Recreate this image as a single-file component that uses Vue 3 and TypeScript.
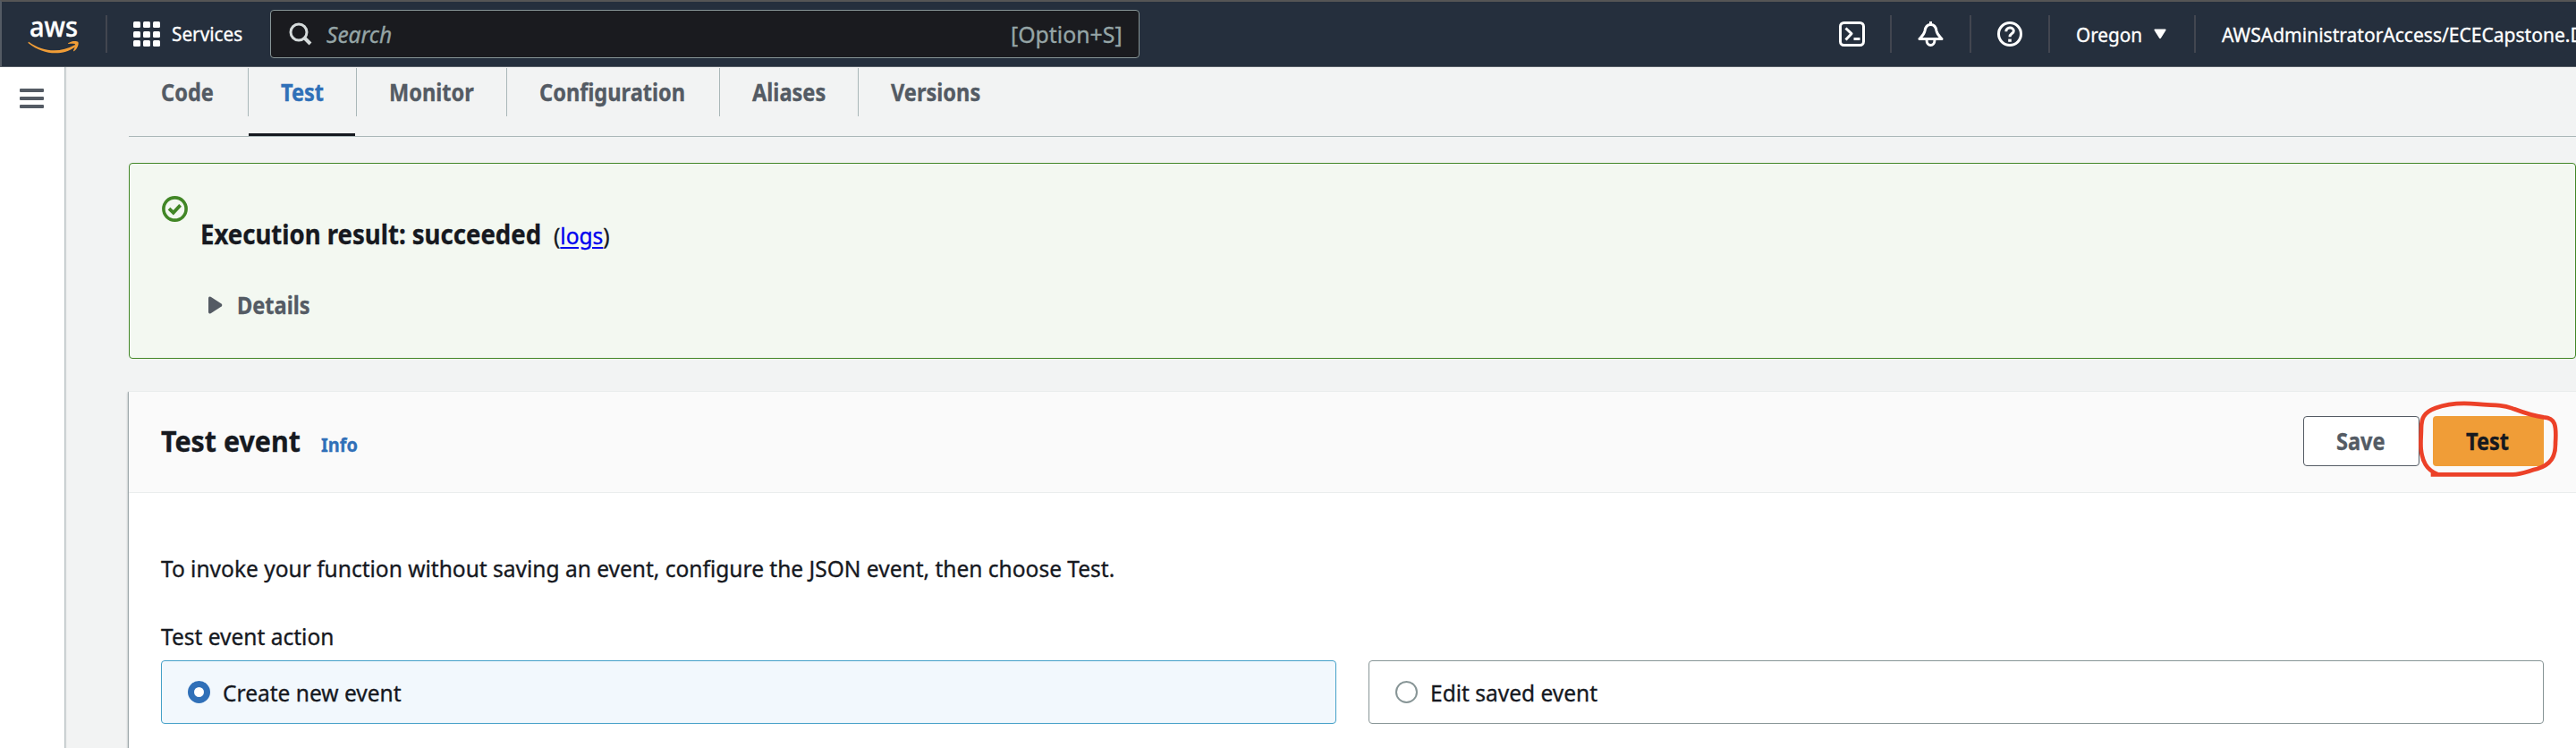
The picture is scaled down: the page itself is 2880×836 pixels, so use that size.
<script setup lang="ts">
import { ref } from 'vue'

const tabs: string[] = ['Code', 'Test', 'Monitor', 'Configuration', 'Aliases', 'Versions']
const activeTab = ref('Test')
const actions: string[] = ['Create new event', 'Edit saved event']
const selectedAction = ref('Create new event')
const cells = [0, 1, 2, 3, 4, 5, 6, 7, 8]
</script>

<template>
  <div class="console">
    <header class="topbar">
      <div class="logo">
        <svg width="60" height="48" viewBox="0 0 60 48">
          <text x="3" y="27" textLength="54" lengthAdjust="spacingAndGlyphs" class="logo-text">aws</text>
          <path d="M2.5 33 C18 44.5 38 45 53 36.5 C54.6 35.8 55.5 37.3 54.2 38.4 C39 49 18 47 2 34.4 C1 33.4 1.7 32.4 2.5 33Z" class="smile" />
          <path d="M46.5 34 C50 31.6 55.5 31.4 57.3 32.8 C58.6 35 56.6 40.6 53 43 C52.2 43.5 51.8 43 52.2 42.2 C53.4 39.6 54.6 36.4 54 35.4 C53 34.4 49.6 34.8 47 35 C46 35 45.8 34.5 46.5 34Z" class="smile" />
        </svg>
      </div>
      <button class="services">
        <span class="waffle"><i v-for="c in cells" :key="c"></i></span>
        <span class="t services-label">Services</span>
      </button>
      <div class="search">
        <svg class="search-icon" width="26" height="26" viewBox="0 0 26 26">
          <circle cx="11" cy="11" r="9" fill="none" stroke="#d5dbdb" stroke-width="3" />
          <path d="M17.5 17.5 L24 24" stroke="#d5dbdb" stroke-width="4" />
        </svg>
        <span class="t placeholder">Search</span>
        <span class="shortcut"><span class="t">[Option+S]</span></span>
      </div>
      <nav class="tools">
        <div class="tool icon">
          <svg width="29" height="28" viewBox="0 0 29 28" fill="none" stroke="#fff" stroke-width="3">
            <rect x="1.5" y="1.5" width="26" height="25" rx="4" />
            <path d="M7.5 7.5 L14 13.7 L7.5 20.5" stroke-linejoin="round" />
            <path d="M16.5 19.5 H23.5" />
          </svg>
        </div>
        <div class="tool icon">
          <svg width="29" height="28" viewBox="0 0 29 28" fill="none" stroke="#fff" stroke-width="3" stroke-linejoin="round">
            <path d="M14.5 0 V3.5" />
            <path d="M14.5 3.5 C9.5 3.5 8.5 7 8 10.5 C7.3 14.5 4.5 16.5 2 19.5 H27 C24.5 16.5 21.7 14.5 21 10.5 C20.5 7 19.5 3.5 14.5 3.5Z" />
            <path d="M10 20.5 C10 28.5 19 28.5 19 20.5" />
          </svg>
        </div>
        <div class="tool icon">
          <svg width="28" height="28" viewBox="0 0 28 28" fill="none" stroke="#fff" stroke-width="3">
            <circle cx="14" cy="14" r="12.5" />
            <path d="M9.8 11.2 C9.8 5.8 18.3 5.8 18.3 10.5 C18.3 13.8 14 13.4 14 17.3" />
            <path d="M14 19.6 V22.8" stroke-width="3.6" />
          </svg>
        </div>
        <div class="tool region">
          <span class="t region-name">Oregon</span>
          <svg width="14" height="12" viewBox="0 0 14 12"><path d="M1.3 0.5 H12.7 Q14.2 0.7 13.2 2.2 L8 10.6 Q7 12 6 10.6 L0.8 2.2 Q-0.2 0.7 1.3 0.5Z" fill="#fff" /></svg>
        </div>
        <div class="tool account"><span class="t">AWSAdministratorAccess/ECECapstone.D</span></div>
      </nav>
    </header>

    <div class="body">
      <aside class="rail">
        <div class="menu"><i></i><i></i><i></i></div>
      </aside>
      <main class="main">
        <nav class="tabs">
          <div v-for="tab in tabs" :key="tab" class="tab" :class="{ active: tab === activeTab }" @click="activeTab = tab">
            <div class="tab-label"><span class="t b">{{ tab }}</span></div>
          </div>
        </nav>

        <section class="alert">
          <svg class="ok" width="29" height="29" viewBox="0 0 29 29" fill="none" stroke="#418626">
            <circle cx="14.5" cy="14.5" r="12.6" stroke-width="3.6" />
            <path d="M8 14.2 L12.8 18.7 L20.6 10.4" stroke-width="3.8" />
          </svg>
          <div class="alert-content">
            <div class="result">
              <h3 class="result-title"><span class="t b">Execution result: succeeded</span></h3>
              <span class="t logs">(<a>logs</a>)</span>
            </div>
            <div class="details">
              <svg width="16" height="20" viewBox="0 0 16 20"><path d="M0 2.2 Q0.2 -0.4 2.6 0.8 L14.6 8.6 Q16 10 14.6 11.4 L2.6 19.2 Q0.2 20.4 0 17.8Z" fill="#545b64" /></svg>
              <span class="t b">Details</span>
            </div>
          </div>
        </section>

        <section class="panel">
          <header class="panel-head">
            <div class="heading">
              <h2 class="panel-title"><span class="t title-text">Test event</span></h2>
              <a class="t b info">Info</a>
            </div>
            <div class="buttons">
              <button class="btn save"><span class="t b">Save</span></button>
              <button class="btn run">
                <span class="t b">Test</span>
                <svg class="scribble" width="340" height="150" viewBox="0 0 1020 450" fill="none" stroke="#ec4128" stroke-width="14" stroke-linejoin="round">
                  <path d="M533 331 H808 C840 331 860 319 890 312 C935 298 952 272 951 225 C955 165 950 141 912 139 C870 134 838 121 806 109 C760 93 735 101 690 95 C635 89 590 93 549 108 C507 124 502 143 501 175 C501 200 498 220 500 245 C504 285 517 316 558 331" />
                </svg>
              </button>
            </div>
          </header>
          <div class="panel-body">
            <p class="hint"><span class="t">To invoke your function without saving an event, configure the JSON event, then choose Test.</span></p>
            <div class="field-label"><span class="t">Test event action</span></div>
            <div class="tiles">
              <div v-for="action in actions" :key="action" class="tile" :class="{ selected: action === selectedAction }" @click="selectedAction = action">
                <span class="radio"></span>
                <span class="t">{{ action }}</span>
              </div>
            </div>
          </div>
        </section>
      </main>
    </div>
  </div>
</template>

<style>
body {
  margin: 0;
  overflow: hidden;
}
</style>

<style scoped>
.console {
  width: 2880px;
  height: 836px;
  overflow: hidden;
  display: flex;
  flex-direction: column;
  background: #f2f3f3;
  color: #16191f;
  font: 26px/36px "Noto Sans", "Open Sans", sans-serif;
}
.console * { box-sizing: border-box; }
button { font: inherit; color: inherit; background: none; border: 0; padding: 0; }
h2, h3, p { margin: 0; font: inherit; }
i { display: block; }
svg { display: block; flex: none; }

/* Condensed lettering */
.t {
  display: inline-block;
  white-space: nowrap;
  transform: scaleX(0.943);
  transform-origin: 0 50%;
  -webkit-text-stroke: 0.35px currentColor;
}
.t.b {
  font-weight: 700;
  transform: scaleX(0.907);
}

.topbar {
  flex: none;
  height: 75px;
  display: flex;
  align-items: center;
  border-top: 2px solid #555;
  border-left: 2px solid #545b64;
  border-bottom: 1px solid #545b64;
  background: #252f3d;
  color: #fff;
  font-size: 22px;
}
.logo { width: 118px; height: 42px; padding-left: 28px; border-right: 2px solid #424650; display: flex; align-items: center; }
.logo-text { font: 500 31px "Noto Sans", sans-serif; fill: #fff; stroke: #fff; stroke-width: 0.4px; }
.smile { fill: #f09d37; }
.services { width: 182px; display: flex; align-items: center; padding-left: 29px; text-align: left; }
.waffle { display: grid; grid-template-columns: repeat(3, 7.6px); grid-auto-rows: 7px; gap: 3.4px; margin-right: 13px; }
.waffle i { background: #fff; border-radius: 1.5px; }
.services-label { position: relative; top: -1px; }
.search {
  width: 972px;
  height: 54px;
  display: flex;
  align-items: center;
  padding: 0 12px 0 20px;
  border: 1px solid #879596;
  border-radius: 4px;
  background: #1a1b1f;
  color: #95a5a6;
  font-size: 26px;
}
.placeholder { font-style: italic; margin-left: 16px; }
.shortcut { margin-left: auto; width: 131px; }
.shortcut .t { transform: scaleX(0.955); }
.tools { flex: 1; display: flex; align-items: center; justify-content: flex-end; min-width: 0; overflow: hidden; }
.tool { flex: none; height: 42px; display: flex; align-items: center; border-left: 2px solid #424650; }
.tool.icon { width: 88.5px; padding-left: 29px; }
.tool.icon:first-child { border-left-color: transparent; }
.tool.region { width: 163px; padding-left: 29px; }
.region-name { width: 87px; }
.account { width: 427px; padding-left: 29px; overflow: hidden; }
.account .t { transform: scaleX(0.956); }

.body { flex: 1; display: flex; min-height: 0; }
.rail { width: 73px; flex: none; background: #fff; border-right: 1px solid #bcc4c6; box-shadow: 1px 0 1px rgba(0, 28, 36, 0.12); }
.menu { display: flex; flex-direction: column; gap: 5px; padding: 24px 0 0 22px; }
.menu i { width: 27px; height: 4px; background: #545b64; border-radius: 1px; }
.main { flex: 1; min-width: 0; padding-left: 71px; }

.tabs {
  height: 78px;
  display: grid;
  grid-template-columns: 134px 121px 168px 238px 155px 1fr;
  padding-top: 1px;
  border-bottom: 1px solid #aab7b8;
  color: #545b64;
}
.tab { display: flex; flex-direction: column; justify-content: space-between; }
.tab-label { height: 54px; padding: 9px 0 0 36px; border-right: 1px solid #aab7b8; }
.tab:last-child .tab-label { border-right: 0; }
.tab.active { color: #3070b8; }
.tab.active::after { content: ""; width: 119px; height: 3px; background: #16191f; }

.alert {
  height: 219px;
  margin-top: 29px;
  display: flex;
  padding: 36px;
  border: 1px solid #418626;
  border-radius: 4px;
  background: #f3f8f1;
}
.ok { margin-right: 14px; }
.alert-content { padding-top: 21px; }
.result { display: flex; align-items: baseline; height: 48px; }
.result-title { width: 395px; font-size: 30px; line-height: 44px; }
.result-title .t.b { transform: scaleX(0.918); }
.logs a { color: #0000ee; text-decoration: underline; text-underline-offset: 3px; }
.details { display: flex; align-items: center; gap: 16px; padding-left: 9px; margin-top: 35px; color: #545b64; height: 36px; }

.panel {
  height: 420px;
  margin: 36px 0 0 0;
  border-top: 1px solid #eaeded;
  background: #fff;
  box-shadow: -1px 1px 1px rgba(0, 28, 36, 0.28), -2px 2px 2px rgba(0, 28, 36, 0.1);
}
.panel-head {
  height: 113px;
  display: flex;
  align-items: center;
  justify-content: space-between;
  padding: 0 36px;
  border-bottom: 1px solid #eaeded;
  background: #fafafa;
}
.heading { display: flex; align-items: baseline; position: relative; top: -1px; }
.panel-title { width: 179px; font-size: 32px; line-height: 44px; }
.title-text { font-weight: 700; transform: scaleX(0.95); }
.info { font-size: 22px; color: #3070b8; }
.buttons { display: flex; gap: 15px; margin-bottom: 2px; }
.btn { height: 56px; border-radius: 4px; text-align: left; padding-left: 36px; }
.save { width: 130px; border: 1px solid #545b64; background: #fff; color: #545b64; }
.run { width: 124px; position: relative; padding-left: 37px; background: #f09d37; }
.scribble { position: absolute; left: -180px; top: -45px; pointer-events: none; }

.panel-body { padding: 66px 36px 0; }
.hint { height: 76px; }
.field-label { height: 45px; }
.tiles { display: grid; grid-template-columns: 1fr 1fr; gap: 36px; }
.tile { height: 71px; display: flex; align-items: center; gap: 14px; padding-left: 29px; border: 1px solid #879596; border-radius: 4px; }
.tile.selected { border-color: #44a0c8; background: #f2f8fd; }
.radio { width: 25px; height: 25px; border: 2px solid #879596; border-radius: 50%; background: #fff; }
.selected .radio { border: 7.5px solid #3070b8; }
</style>
